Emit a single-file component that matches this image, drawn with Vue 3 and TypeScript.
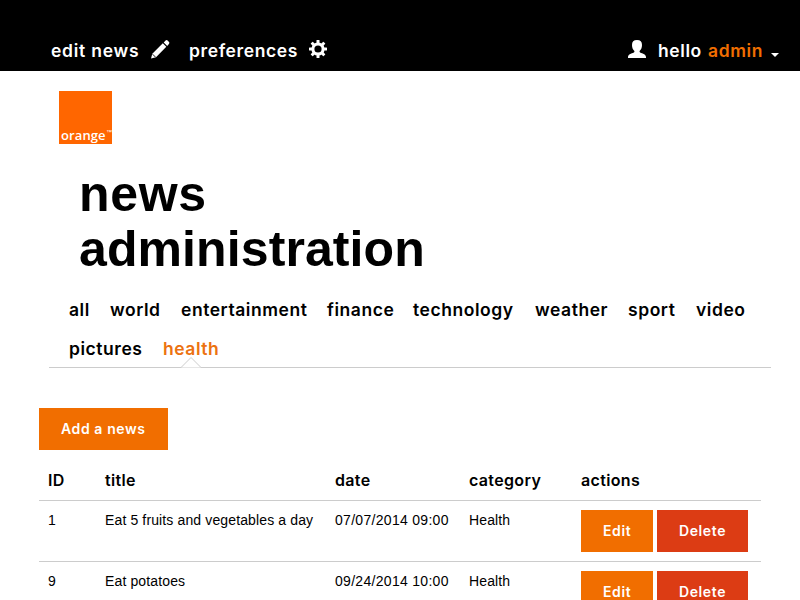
<script setup lang="ts">
interface Category { name: string; width: number }
interface NewsItem { id: number; title: string; date: string; category: string }

const categories: Category[] = [
  { name: 'all', width: 41 },
  { name: 'world', width: 71 },
  { name: 'entertainment', width: 146 },
  { name: 'finance', width: 86 },
  { name: 'technology', width: 122 },
  { name: 'weather', width: 93 },
  { name: 'sport', width: 68 },
  { name: 'video', width: 60 },
  { name: 'pictures', width: 94 },
  { name: 'health', width: 56 },
]
const active = 'health'

const items: NewsItem[] = [
  { id: 1, title: 'Eat 5 fruits and vegetables a day', date: '07/07/2014 09:00', category: 'Health' },
  { id: 9, title: 'Eat potatoes', date: '09/24/2014 10:00', category: 'Health' },
]
</script>

<template>
  <div class="page">
    <header class="topbar">
      <a class="top-link edit">edit news</a>
      <svg class="pencil" width="19" height="20" viewBox="0 0 19 20">
        <path fill="#fff" d="M0 18.500 1.300 13.800 11.800 3.300 15.300 6.800 5 17.300ZM12.700 2.400 14.600.5Q15.600-.4 16.600.6L18 1.900Q18.800 2.800 17.900 3.900L16.200 5.900Z" />
        <path stroke="#000" stroke-width=".9" d="M1.600 14.200 4.600 17.200" />
      </svg>
      <a class="top-link prefs">preferences</a>
      <svg class="gear" width="18" height="18" viewBox="0 0 18 18">
        <g fill="#fff">
          <rect v-for="n in 8" :key="n" x="7.5" y="0" width="3" height="4.5" rx=".5" :transform="`rotate(${n * 45} 9 9)`" />
        </g>
        <circle cx="9" cy="9" r="5.100" fill="none" stroke="#fff" stroke-width="3" />
      </svg>
      <div class="user">
        <svg class="person" width="18" height="18" viewBox="0 0 18 18">
          <path fill="#fff" d="M9 0C12.500 0 14 1.700 14 5c0 2.500-.8 4.600-2.400 6v1c1 1.300 6.400 1.800 6.400 5v1H0v-1c0-3.200 5.400-3.700 6.400-5v-1C4.800 9.600 4 7.500 4 5 4 1.700 5.500 0 9 0Z" />
        </svg>
        <span class="top-link hello">hello</span>
        <span class="top-link name">admin</span>
        <svg class="caret" width="8" height="4" viewBox="0 0 8 4"><path fill="#fff" d="M0 0h8L4 4Z" /></svg>
      </div>
    </header>

    <div class="logo"><span class="brand">orange</span><span class="tm">™</span></div>

    <h1><span class="short">news</span><br>administration</h1>

    <nav class="tabs">
      <a v-for="c in categories" :key="c.name" class="tab" :class="{ active: c.name === active }" :style="{ width: c.width + 'px' }">
        {{ c.name }}
        <svg v-if="c.name === active" class="notch" width="20" height="11" viewBox="0 0 20 11">
          <path fill="#fff" stroke="#ccc" d="M0 10.500 10 .5 20 10.500" />
        </svg>
      </a>
    </nav>

    <main>
      <button class="btn add">Add a news</button>
      <div class="row head">
        <span>ID</span><span>title</span><span>date</span><span>category</span><span>actions</span>
      </div>
      <div v-for="n in items" :key="n.id" class="row">
        <span>{{ n.id }}</span>
        <span>{{ n.title }}</span>
        <span class="date">{{ n.date }}</span>
        <span>{{ n.category }}</span>
        <div class="actions">
          <button class="btn">Edit</button>
          <button class="btn delete">Delete</button>
        </div>
      </div>
    </main>
  </div>
</template>

<style>
body { margin: 0; background: #fff; overflow: hidden; }
</style>

<style scoped>
.page {
  height: 600px;
  overflow: hidden;
  font-family: "Liberation Sans", Arial, sans-serif;
  color: #000;
}
.topbar {
  display: flex;
  align-items: flex-start;
  height: 71px;
  box-sizing: border-box;
  padding: 40px 21px 0 51px;
  background: #000;
  color: #fff;
}
.top-link { font: 600 17.5px/22px Inter, "Liberation Sans", sans-serif; letter-spacing: .6px; white-space: nowrap; }
.edit { width: 100px; letter-spacing: .75px; }
.pencil { margin-right: 19px; }
.prefs { width: 120px; }
.user { display: flex; margin-left: auto; }
.person { margin-right: 12px; }
.hello { width: 50px; }
.name { width: 63px; color: #f16e00; }
.caret { margin-top: 13px; }
.logo {
  display: flex;
  align-items: flex-end;
  width: 53px;
  height: 53px;
  margin: 20px 0 0 59px;
  box-sizing: border-box;
  padding-left: 2px;
  background: #f60;
  color: #fff;
}
.brand { width: 45px; font: 600 13px/18px "Open Sans", sans-serif; letter-spacing: .1px; }
.tm { font-size: 6px; line-height: 23px; }
h1 { margin: 23px 0 0 79px; font-size: 50px; line-height: 55px; font-weight: bold; letter-spacing: .1px; }
.short { letter-spacing: .7px; }
.tabs {
  display: flex;
  flex-wrap: wrap;
  margin: 14px 29px 0 49px;
  padding: 0 10px 0 20px;
  height: 76px;
  border-bottom: 1px solid #ccc;
}
.tab { position: relative; height: 39px; font: 600 17.5px/38px Inter, "Liberation Sans", sans-serif; letter-spacing: .55px; white-space: nowrap; }
.tab.active { height: 37px; color: #ec7211; }
.notch { position: absolute; left: 18px; bottom: -1px; }
main { padding: 40px 39px 0; }
.btn {
  display: block;
  height: 42px;
  border: 0;
  padding: 0 0 0 22px;
  background: #f16e00;
  color: #fff;
  font: 600 14px/42px Inter, "Liberation Sans", sans-serif;
  letter-spacing: .6px;
  text-align: left;
  width: 72px;
}
.btn.add { width: 129px; }
.btn.delete { width: 91px; background: #dc3c14; }
.row {
  display: grid;
  grid-template-columns: 57px 230px 134px 112px 1fr;
  height: 61px;
  box-sizing: border-box;
  padding: 9px 0 0 9px;
  border-top: 1px solid #ccc;
  font-size: 14px;
  line-height: 21px;
  letter-spacing: .13px;
  white-space: nowrap;
}
.date { letter-spacing: .3px; }
.row.head {
  height: 50px;
  padding-top: 20px;
  border: 0;
  font: 600 16px/21px Inter, "Liberation Sans", sans-serif;
  letter-spacing: .35px;
}
.actions { display: flex; gap: 4px; }
</style>
